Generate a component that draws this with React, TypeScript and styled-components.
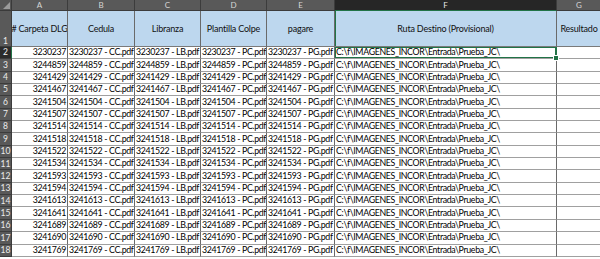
import React from "react";
import styled, { createGlobalStyle, css } from "styled-components";

const Global = createGlobalStyle`
  html, body { margin: 0; padding: 0; background: #ffffff; overflow: hidden; }
  body { width: 600px; height: 259px; }
`;

const FONT = `"Lato", "Open Sans", "Liberation Sans", sans-serif`;

const COLS = "12px 56px 67px 66px 66px 68px 222px 45px";
const ROW_H = 12.35;

const Sheet = styled.div`
  display: grid;
  grid-template-columns: ${COLS};
  grid-template-rows: 11px 36px repeat(17, ${ROW_H}px);
  width: 600px;
  height: 259px;
  overflow: hidden;
  font-family: ${FONT};
  font-size: 9px;
  color: #000;
  background: #fff;
`;

const Corner = styled.div`
  background: #555555;
  border-right: 1px solid #3a3a3a;
  border-bottom: 1px solid #3a3a3a;
  position: relative;
  &::after {
    content: "";
    position: absolute;
    right: 1px;
    bottom: 1px;
    width: 0;
    height: 0;
    border-left: 7px solid transparent;
    border-bottom: 7px solid #9a9a9a;
  }
`;

const ColHead = styled.div<{ $sel?: boolean }>`
  background: ${(p) => (p.$sel ? "#262626" : "#595959")};
  color: ${(p) => (p.$sel ? "#e8e8e8" : "#d6d6d6")};
  border-right: 1px solid #3c3c3c;
  border-bottom: 1px solid ${(p) => (p.$sel ? "#217346" : "#3c3c3c")};
  display: flex;
  align-items: center;
  justify-content: center;
  font-size: 8px;
  line-height: 1;
  box-sizing: border-box;
`;

const RowHead = styled.div<{ $sel?: boolean; $bottom?: boolean }>`
  background: ${(p) => (p.$sel ? "#2b2b2b" : "#595959")};
  color: ${(p) => (p.$sel ? "#f4f4f4" : "#ececec")};
  border-right: 1px solid ${(p) => (p.$sel ? "#217346" : "#3c3c3c")};
  border-bottom: 1px solid #3c3c3c;
  display: flex;
  align-items: ${(p) => (p.$bottom ? "flex-end" : "center")};
  justify-content: center;
  padding-bottom: ${(p) => (p.$bottom ? "1px" : "0")};
  font-size: 8.5px;
  line-height: 1;
  box-sizing: border-box;
`;

const HeadCell = styled.div<{ $selLeft?: boolean }>`
  background: #bdd7ee;
  border-right: 1px solid #6a6a6a;
  border-bottom: 1px solid #7a7a7a;
  ${(p) =>
    p.$selLeft &&
    css`
      box-shadow: inset 1px 0 0 #217346;
    `}
  display: flex;
  align-items: center;
  justify-content: center;
  white-space: nowrap;
  overflow: hidden;
  color: #111;
  font-size: 9px;
  letter-spacing: -0.2px;
  box-sizing: border-box;
`;

const Cell = styled.div<{ $align?: "left" | "right" }>`
  background: #fff;
  border-right: 1px solid #6a6a6a;
  border-bottom: 1px solid #a0a0a0;
  display: flex;
  align-items: center;
  justify-content: ${(p) => (p.$align === "right" ? "flex-end" : "flex-start")};
  padding: ${(p) => (p.$align === "right" ? "0 1px 0 0" : "0 0 0 1px")};
  white-space: nowrap;
  overflow: hidden;
  line-height: 1;
  font-size: 8.8px;
  letter-spacing: -0.35px;
  box-sizing: border-box;
`;

const ActiveCell = styled(Cell)`
  position: relative;
  overflow: visible;
  box-shadow: inset 0 0 0 1px #217346;
  border-right: 1px solid #217346;
  &::after {
    content: "";
    position: absolute;
    right: -3px;
    bottom: -3px;
    width: 4px;
    height: 4px;
    background: #217346;
    border: 1px solid #fff;
    z-index: 2;
  }
`;

const ids = [
  "3230237",
  "3244859",
  "3241429",
  "3241467",
  "3241504",
  "3241507",
  "3241514",
  "3241518",
  "3241522",
  "3241534",
  "3241593",
  "3241594",
  "3241613",
  "3241641",
  "3241689",
  "3241690",
  "3241769",
];

const letters = ["A", "B", "C", "D", "E", "F", "G"];
const headers = [
  "# Carpeta DLG",
  "Cedula",
  "Libranza",
  "Plantilla Colpe",
  "pagare",
  "Ruta Destino (Provisional)",
  "Resultado",
];
const PATH = "C:\\f\\IMAGENES_INCOR\\Entrada\\Prueba_JC\\";

export default function App() {
  return (
    <>
      <Global />
      <Sheet>
        <Corner />
        {letters.map((l) => (
          <ColHead key={l} $sel={l === "F"}>
            {l}
          </ColHead>
        ))}
        <RowHead $bottom>1</RowHead>
        {headers.map((h, i) => (
          <HeadCell key={h} $selLeft={i === 5}>
            {h}
          </HeadCell>
        ))}
        {ids.map((id, r) => {
          const rowNum = r + 2;
          return (
            <React.Fragment key={id}>
              <RowHead $sel={rowNum === 2}>{rowNum}</RowHead>
              <Cell $align="right">{id}</Cell>
              <Cell>{id} - CC.pdf</Cell>
              <Cell>{id} - LB.pdf</Cell>
              <Cell>{id} - PC.pdf</Cell>
              <Cell>{id} - PG.pdf</Cell>
              {rowNum === 2 ? <ActiveCell>{PATH}</ActiveCell> : <Cell>{PATH}</Cell>}
              <Cell />
            </React.Fragment>
          );
        })}
      </Sheet>
    </>
  );
}
